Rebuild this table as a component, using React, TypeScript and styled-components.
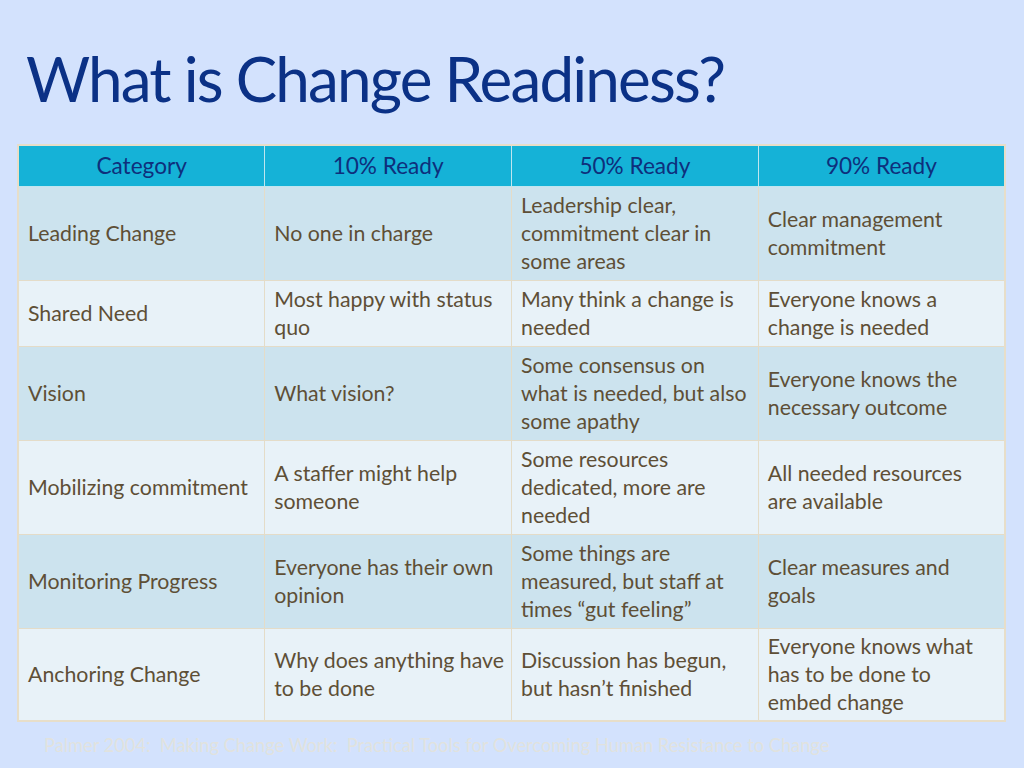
import React from "react";
import styled, { createGlobalStyle } from "styled-components";

const Global = createGlobalStyle`
  html, body { margin: 0; padding: 0; }
  body { background: #d3e2fd; font-family: Lato, "Open Sans", sans-serif; }
`;

const Slide = styled.div`
  width: 1024px;
  height: 768px;
  box-sizing: border-box;
  padding: 40px 18px 0 17px;
  display: flex;
  flex-direction: column;
  overflow: hidden;
`;

const Title = styled.h1`
  margin: 0 0 0 9px;
  font-family: Lato, sans-serif;
  font-weight: 400;
  font-size: 62px;
  line-height: 76px;
  letter-spacing: -1.85px;
  color: #0b3186;
  height: 104px;
`;

const Table = styled.table`
  width: 989px;
  border-collapse: collapse;
  table-layout: fixed;
  border: 2px solid #e7dec9;
`;

const HeadCell = styled.th`
  background: #15b2d7;
  color: #0e2f7c;
  font-weight: 400;
  font-size: 22.6px;
  height: 41px;
  padding: 0;
  text-align: center;
  border: 1px solid #bfe6ef;
  box-sizing: border-box;
`;

const Row = styled.tr<{ $light: boolean; $h: number }>`
  height: ${(p) => p.$h}px;
  background: ${(p) => (p.$light ? "#e8f2f8" : "#cce3ee")};
`;

const Cell = styled.td`
  padding: 0 8px 0 9px;
  font-size: 21.3px;
  line-height: 28px;
  color: #5e4f36;
  vertical-align: middle;
  white-space: nowrap;
  border: 1px solid #e4dcc8;
`;

const Line = styled.span`
  display: block;
`;

const Footer = styled.div`
  margin: 12px 0 0 27px;
  font-size: 18.25px;
  line-height: 22px;
  color: #e1e2de;
  white-space: pre;
`;

const rows: { h: number; c: string[][] }[] = [
  {
    h: 94,
    c: [
      ["Leading Change"],
      ["No one in charge"],
      ["Leadership clear,", "commitment clear in", "some areas"],
      ["Clear management", "commitment"],
    ],
  },
  {
    h: 66,
    c: [
      ["Shared Need"],
      ["Most happy with status", "quo"],
      ["Many think a change is", "needed"],
      ["Everyone knows a", "change is needed"],
    ],
  },
  {
    h: 94,
    c: [
      ["Vision"],
      ["What vision?"],
      ["Some consensus on", "what is needed, but also", "some apathy"],
      ["Everyone knows the", "necessary outcome"],
    ],
  },
  {
    h: 94,
    c: [
      ["Mobilizing commitment"],
      ["A staffer might help", "someone"],
      ["Some resources", "dedicated, more are", "needed"],
      ["All needed resources", "are available"],
    ],
  },
  {
    h: 94,
    c: [
      ["Monitoring Progress"],
      ["Everyone has their own", "opinion"],
      ["Some things are", "measured, but staff at", "times \u201Cgut feeling\u201D"],
      ["Clear measures and", "goals"],
    ],
  },
  {
    h: 93,
    c: [
      ["Anchoring Change"],
      ["Why does anything have", "to be done"],
      ["Discussion has begun,", "but hasn\u2019t finished"],
      ["Everyone knows what", "has to be done to", "embed change"],
    ],
  },
];

export default function App() {
  return (
    <>
      <Global />
      <Slide>
        <Title>What is Change Readiness?</Title>
        <Table>
          <thead>
            <tr>
              {["Category", "10% Ready", "50% Ready", "90% Ready"].map((h) => (
                <HeadCell key={h}>{h}</HeadCell>
              ))}
            </tr>
          </thead>
          <tbody>
            {rows.map((r, i) => (
              <Row key={i} $light={i % 2 === 1} $h={r.h}>
                {r.c.map((lines, j) => (
                  <Cell key={j}>
                    {lines.map((l, k) => (
                      <Line key={k}>{l}</Line>
                    ))}
                  </Cell>
                ))}
              </Row>
            ))}
          </tbody>
        </Table>
        <Footer>{"Palmer 2004:  Making Change Work:  Practical Tools for Overcoming Human Resistance to Change"}</Footer>
      </Slide>
    </>
  );
}
